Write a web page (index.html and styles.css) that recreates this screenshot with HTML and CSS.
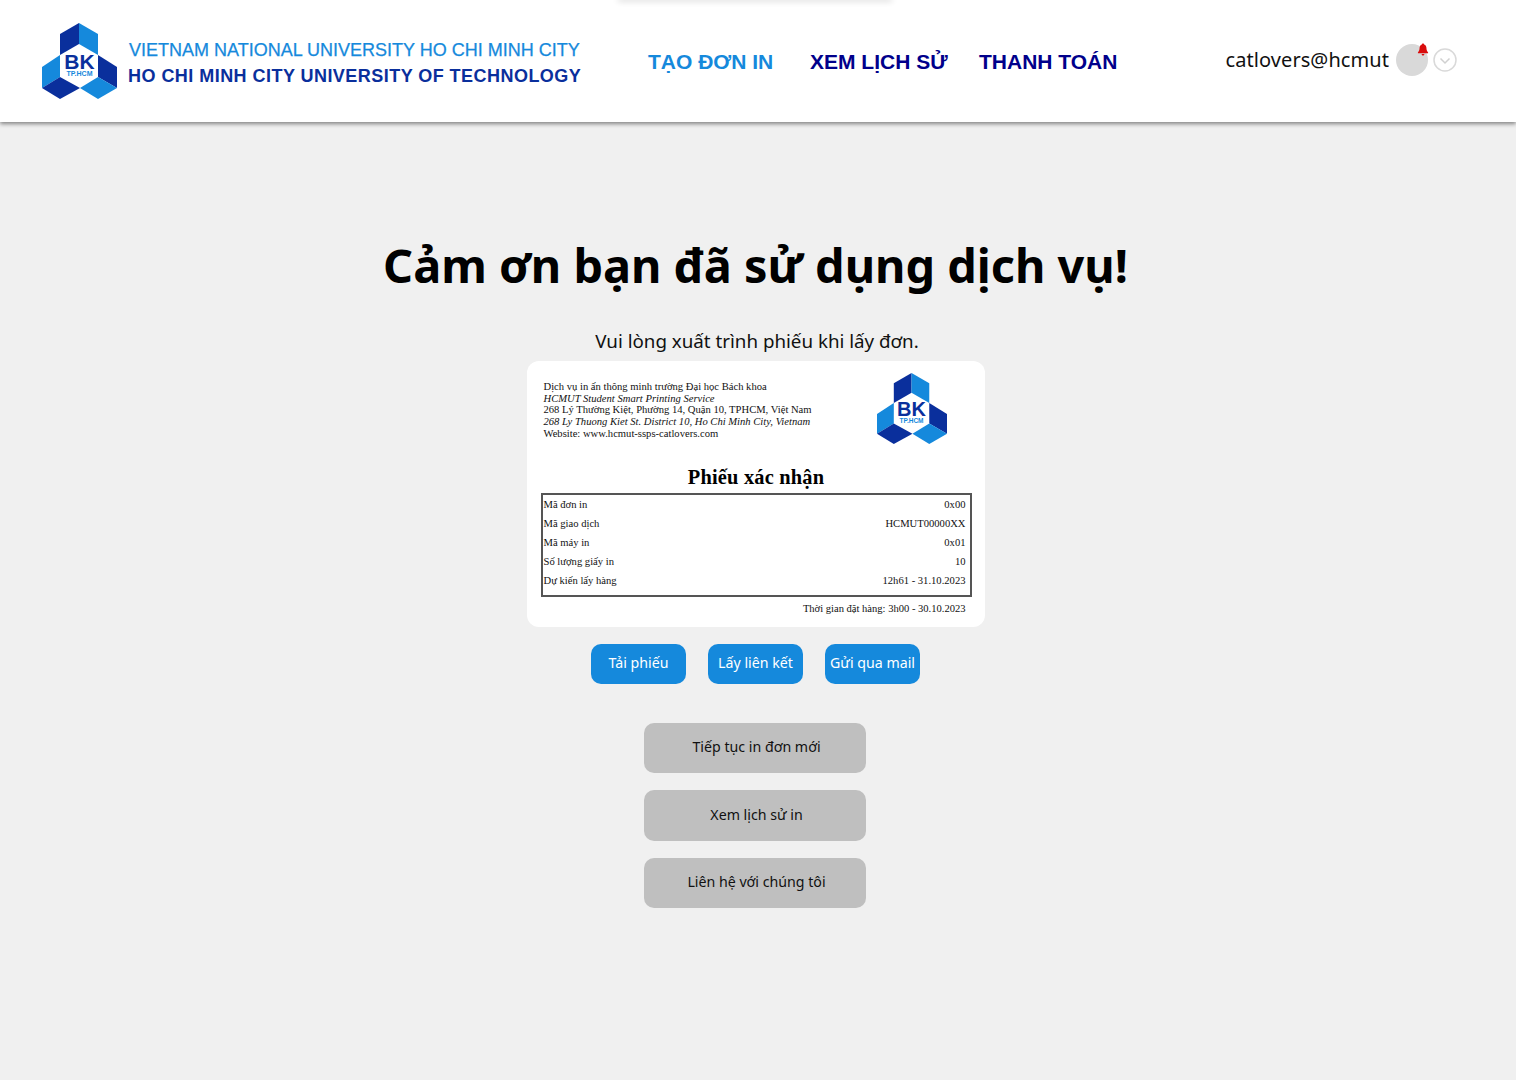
FILE: index.html
```html
<!DOCTYPE html>
<html lang="vi">
<head>
<meta charset="utf-8">
<title>Cảm ơn</title>
<link rel="stylesheet" href="styles.css">
</head>
<body>
<svg class="defs" width="0" height="0" aria-hidden="true">
  <symbol id="bk" viewBox="0 0 75 76">
    <polygon fill="#0a2f9c" points="37,0 18,11 18,32 37,21"/>
    <polygon fill="#1589dc" points="37,0 56,11 56,32 37,21"/>
    <polygon fill="#1589dc" points="0,44 18,32 18,54 0,65"/>
    <polygon fill="#0a2f9c" points="0,65 18,76 38,65 18,54"/>
    <polygon fill="#0a2f9c" points="56,32 75,44 75,65 56,54"/>
    <polygon fill="#1589dc" points="38,65 56,76 75,65 56,54"/>
  </symbol>
</svg>
<header class="topbar">
  <div class="brand">
    <div class="logo">
      <svg class="logo-svg"><use href="#bk"/></svg>
      <span class="logo-bk">BK</span>
      <span class="logo-tp">TP.HCM</span>
    </div>
    <div class="brand-text">
      <div class="brand-l1">VIETNAM NATIONAL UNIVERSITY HO CHI MINH CITY</div>
      <div class="brand-l2">HO CHI MINH CITY UNIVERSITY OF TECHNOLOGY</div>
    </div>
  </div>
  <nav class="nav">
    <a class="nav-item nav-active">TẠO ĐƠN IN</a>
    <a class="nav-item">XEM LỊCH SỬ</a>
    <a class="nav-item">THANH TOÁN</a>
  </nav>
  <div class="user">
    <span class="user-mail">catlovers@hcmut</span>
    <span class="avatar">
      <svg class="bell" viewBox="0 0 12 14"><path fill="#d90d0d" d="M6 0.5c.8 0 1.2.6 1.2 1.2C9 2.3 9.7 3.800 9.700 5.500c0 2 .7 3.500 1.800 4.600v.9H.5v-.9C1.600 9 2.300 7.500 2.300 5.500c0-1.700.7-3.200 2.500-3.800C4.800 1.100 5.200.5 6 .5zM4.500 11.800h3C7.300 12.900 6.700 13.500 6 13.500s-1.300-.6-1.500-1.700z"/></svg>
    </span>
    <svg class="chev" viewBox="0 0 24 24"><circle cx="12" cy="12" r="11" fill="none" stroke="#d9d9d9" stroke-width="1.500"/><path d="M7.500 10.500 12 15l4.500-4.500" fill="none" stroke="#d0d0d0" stroke-width="1.500"/></svg>
  </div>
</header>

<main class="main">
  <h1 class="title">Cảm ơn bạn đã sử dụng dịch vụ!</h1>
  <p class="subtitle">Vui lòng xuất trình phiếu khi lấy đơn.</p>

  <section class="receipt">
    <div class="receipt-top">
      <div class="receipt-info">
        <div>Dịch vụ in ấn thông minh trường Đại học Bách khoa</div>
        <div class="it">HCMUT Student Smart Printing Service</div>
        <div>268 Lý Thường Kiệt, Phường 14, Quận 10, TPHCM, Việt Nam</div>
        <div class="it">268 Ly Thuong Kiet St. District 10, Ho Chi Minh City, Vietnam</div>
        <div>Website: www.hcmut-ssps-catlovers.com</div>
      </div>
      <div class="logo logo-small">
        <svg class="logo-svg"><use href="#bk"/></svg>
        <span class="logo-bk">BK</span>
        <span class="logo-tp">TP.HCM</span>
      </div>
    </div>
    <h2 class="receipt-title">Phiếu xác nhận</h2>
    <div class="receipt-table">
      <div class="row"><span>Mã đơn in</span><span>0x00</span></div>
      <div class="row"><span>Mã giao dịch</span><span>HCMUT00000XX</span></div>
      <div class="row"><span>Mã máy in</span><span>0x01</span></div>
      <div class="row"><span>Số lượng giấy in</span><span>10</span></div>
      <div class="row"><span>Dự kiến lấy hàng</span><span>12h61 - 31.10.2023</span></div>
    </div>
    <div class="receipt-foot">Thời gian đặt hàng: 3h00 - 30.10.2023</div>
  </section>

  <div class="actions">
    <button class="btn-blue">Tải phiếu</button>
    <button class="btn-blue">Lấy liên kết</button>
    <button class="btn-blue">Gửi qua mail</button>
  </div>

  <div class="links">
    <button class="btn-gray">Tiếp tục in đơn mới</button>
    <button class="btn-gray">Xem lịch sử in</button>
    <button class="btn-gray">Liên hệ với chúng tôi</button>
  </div>
</main>
</body>
</html>
```
FILE: styles.css
```css
* { box-sizing: border-box; }
html, body { margin: 0; padding: 0; }
body {
  background: #f0f0f0;
  min-height: 1080px;
  font-family: "Noto Sans", sans-serif;
  color: #000;
  overflow: hidden;
}
.defs { position: absolute; }

.topbar {
  height: 122px;
  background: #fff;
  display: flex;
  align-items: center;
  box-shadow: 0 2px 4px rgba(0, 0, 0, .45);
  position: relative;
}
.topbar::before {
  content: "";
  position: absolute;
  top: -3px;
  left: 618px;
  width: 274px;
  height: 3px;
  box-shadow: 0 1px 6px rgba(0, 0, 0, .2);
}
.brand { display: flex; align-items: center; margin-left: 42px; width: 606px; }

.logo { position: relative; width: 75px; height: 76px; flex: none; display: block; }
.logo-svg { width: 100%; height: 100%; display: block; }
.logo-bk {
  position: absolute; left: 0; right: 0; top: 28px; text-align: center;
  font: bold 21px/21px "Liberation Sans", sans-serif; color: #0a2f9c;
}
.logo-tp {
  position: absolute; left: 0; right: 0; top: 47px; text-align: center;
  font: bold 7px/8px "Liberation Sans", sans-serif; color: #1589dc;
}
.logo-small { width: 70px; height: 71px; }
.logo-small .logo-bk { top: 26px; font-size: 20px; }
.logo-small .logo-tp { top: 44px; font-size: 6.500px; }

.brand-text {
  margin-left: 11px;
  padding-top: 4px;
  font-family: "Liberation Sans", sans-serif;
  font-size: 18px;
  line-height: 26px;
  white-space: nowrap;
}
.brand-l1 { color: #1589dc; -webkit-text-stroke: .25px #1589dc; padding-left: 1px; }
.brand-l2 { color: #0a2f9c; font-weight: bold; letter-spacing: .46px; }

.nav {
  display: flex;
  font: bold 21px/26px "Liberation Sans", sans-serif;
  color: #00008b;
  padding-top: 1px;
  white-space: nowrap;
}
.nav-item { display: block; }
.nav-item:nth-child(1) { width: 162px; }
.nav-item:nth-child(2) { width: 169px; }
.nav-active { color: #1589dc; }

.user {
  margin-left: auto;
  margin-right: 59px;
  margin-bottom: 2px;
  display: flex;
  align-items: center;
}
.user-mail { font-size: 20px; line-height: 28px; letter-spacing: .07px; color: #111; }
.avatar {
  width: 32px; height: 32px; border-radius: 50%;
  background: #d9d9d9; margin-left: 7px; position: relative;
}
.bell { position: absolute; left: 21px; top: -1px; width: 12px; height: 13px; }
.chev { width: 24px; height: 24px; margin-left: 5px; display: block; }

.main {
  display: flex;
  flex-direction: column;
  align-items: center;
  padding-right: 5px;
}
.title {
  margin: 109px 0 0;
  font-size: 46.800px;
  line-height: 68px;
  font-weight: 700;
  white-space: nowrap;
}
.subtitle {
  margin: 28px 0 0 3px;
  font-size: 18.750px;
  line-height: 28px;
  color: #111;
  white-space: nowrap;
}
.receipt {
  width: 458px;
  height: 266px;
  margin-top: 6px;
  background: #fff;
  border-radius: 12px;
  padding: 12px 13px 0 14px;
  font-family: "Liberation Serif", serif;
  color: #111;
}
.receipt-top { display: flex; justify-content: space-between; height: 84px; }
.receipt-info { font-size: 10.600px; line-height: 11.700px; padding: 8px 0 0 3px; white-space: nowrap; }
.it { font-style: italic; }
.logo-small { margin-right: 25px; }
.receipt-title {
  margin: 6px 0 2px;
  font-size: 20.400px;
  line-height: 28px;
  font-weight: bold;
  text-align: center;
  letter-spacing: .2px;
  color: #000;
}
.receipt-table {
  height: 104px;
  border: 2px solid #555;
  padding: 0 4px 0 1px;
  font-size: 10.600px;
}
.row { display: flex; justify-content: space-between; height: 19px; line-height: 19px; }
.receipt-foot { font-size: 10.550px; line-height: 14px; text-align: right; padding: 5px 6px 0 0; }

.actions { display: flex; gap: 22px; margin-top: 17px; }
.btn-blue {
  width: 95px;
  height: 40px;
  border: 0;
  padding: 0 0 2px;
  border-radius: 10px;
  background: #1589dc;
  color: #fff;
  font: 14.200px/20px "Noto Sans", sans-serif;
  white-space: nowrap;
}
.links { display: flex; flex-direction: column; gap: 17px; margin: 39px 2px 0 0; }
.btn-gray {
  width: 222px;
  height: 50px;
  border: 0;
  padding: 0 0 2px 4px;
  border-radius: 10px;
  background: #bfbfbf;
  color: #111;
  font: 14.200px/20px "Noto Sans", sans-serif;
}
.btn-gray:nth-child(2) { height: 51px; }
```
